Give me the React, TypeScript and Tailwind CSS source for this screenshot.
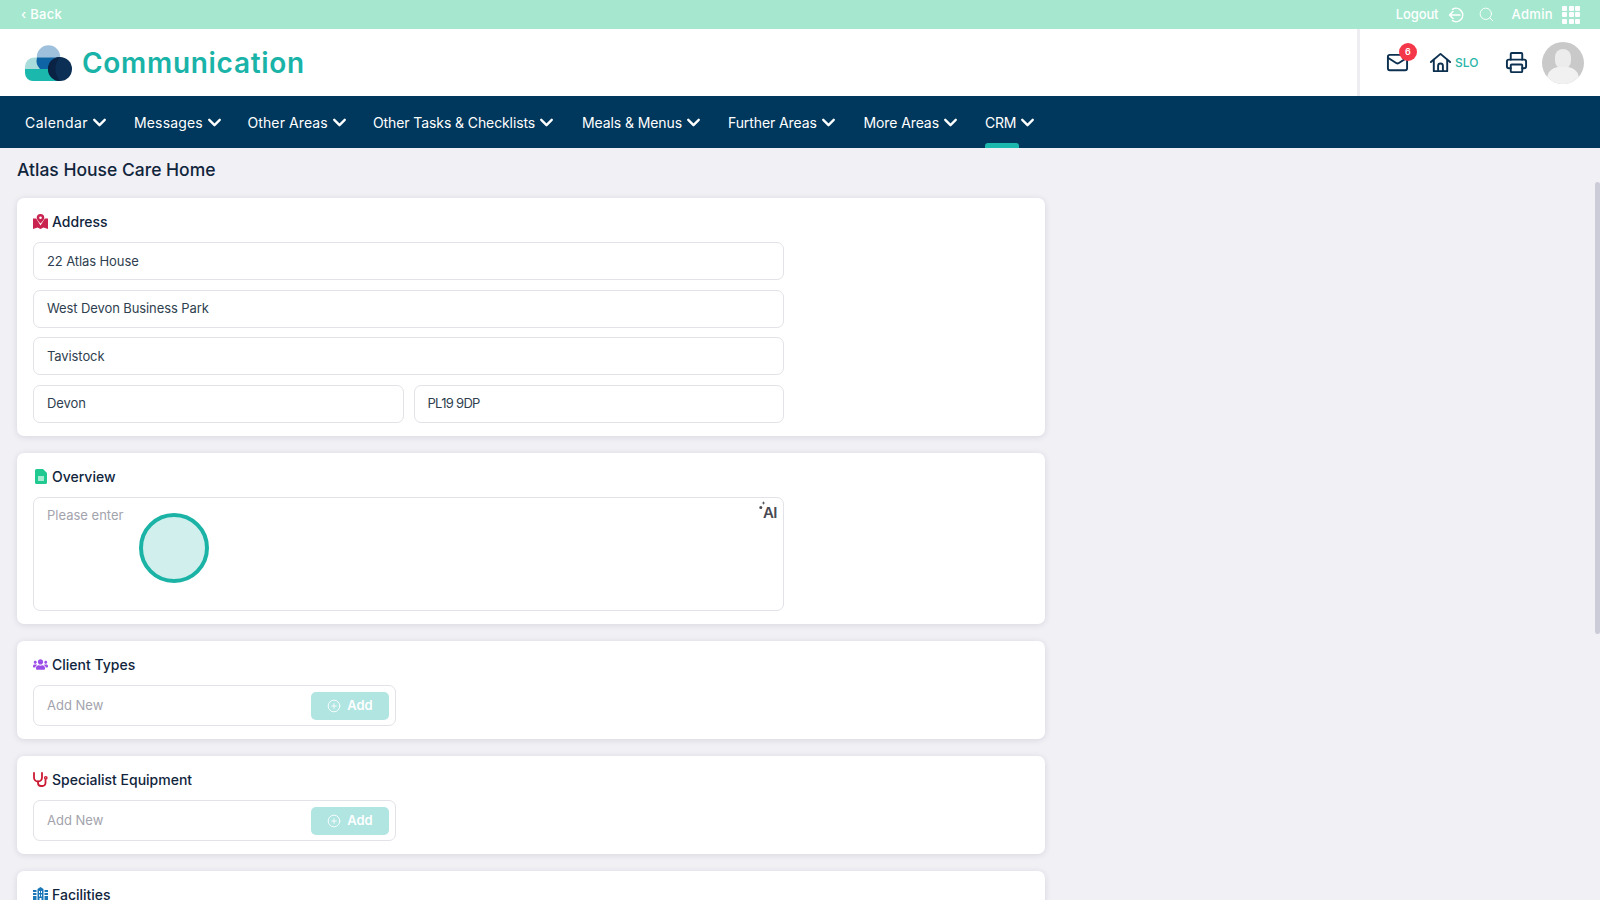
import React from "react";
import { ChevronDown, Mail, Search, Printer, CirclePlus } from "lucide-react";
import { FaUsers } from "react-icons/fa";

const font = { fontFamily: "Inter, 'Noto Sans', sans-serif" };
const nav = [
  { label: "Calendar", box: "w-[109px]", text: "tracking-[0.4px]" },
  { label: "Messages", box: "w-[113.5px]", text: "tracking-[0.15px]" },
  { label: "Other Areas", box: "w-[125.5px]", text: "tracking-[0.1px]" },
  { label: "Other Tasks & Checklists", box: "w-[209px]", text: "tracking-[-0.1px]" },
  { label: "Meals & Menus", box: "w-[146px]", text: "tracking-[-0.1px]" },
  { label: "Further Areas", box: "w-[135.5px]", text: "tracking-[-0.1px]" },
  { label: "More Areas", box: "w-[121.5px]", text: "tracking-[-0.1px]" },
  { label: "CRM", box: "w-[60px]", text: "tracking-[-0.3px]" },
];

function Field({ value, className = "", text = "tracking-[-0.1px]" }: { value: string; className?: string; text?: string }) {
  return (
    <div className={`h-[38px] flex items-center px-[13px] pt-[1px] bg-white border border-[#e2e2e8] rounded-[7px] text-[13px] text-[#2f3f50] ${text} ${className}`}>
      {value}
    </div>
  );
}

function Heading({ icon, children }: { icon: React.ReactNode; children: React.ReactNode }) {
  return (
    <div className="flex items-center gap-[4px] h-[16px] text-[14px] font-medium text-[#10253c]">
      <span className="w-[15px] h-[16px] flex items-center justify-center">{icon}</span>
      <span>{children}</span>
    </div>
  );
}

function Card({ className = "", children }: { className?: string; children: React.ReactNode }) {
  return <section className={`w-[1028px] bg-white rounded-[7px] shadow-[0_1px_6px_rgba(30,30,60,0.12)] px-[16px] pt-[15px] ${className}`}>{children}</section>;
}

function AddRow() {
  return (
    <div className="mt-[13px] w-[363px] h-[41px] border border-[#e2e2e8] rounded-[7px] flex items-center pl-[13px] pr-[6px]">
      <span className="flex-1 text-[13px] text-[#a3a3ad]">Add New</span>
      <span className="w-[78px] h-[28px] mt-[1px] rounded-[5px] bg-[#b0e5e2] text-white text-[13px] font-semibold flex items-center justify-center gap-[6px]">
        <CirclePlus size={14} strokeWidth={1.5} />
        Add
      </span>
    </div>
  );
}

export default function App() {
  return (
    <div style={font} className="relative w-full h-screen overflow-hidden bg-[#f0f0f5] flex flex-col">
      <header className="h-[29px] shrink-0 bg-[#a5e8cf] flex items-center justify-between pl-[21px] pr-[20px] text-white text-[13px] font-medium">
        <span className="tracking-[0.3px]">‹ Back</span>
        <div className="flex items-center">
          <span className="tracking-[-0.1px]">Logout</span>
          <svg className="ml-[10px]" width="16" height="16" viewBox="0 0 16 16" fill="none" stroke="currentColor" strokeWidth="1.5" strokeLinecap="round" strokeLinejoin="round">
            <path d="M4.500 2.300A6.700 6.700 0 1 1 4.500 13.700" />
            <path d="M12 8H1.500M5 4.500 1.500 8 5 11.500" />
          </svg>
          <Search className="ml-[14px]" size={17} strokeWidth={1.3} />
          <span className="ml-[16px] tracking-[0.35px]">Admin</span>
          <div className="ml-[9px] grid grid-cols-3 gap-[1.5px]">
            {Array.from({ length: 9 }).map((_, i) => (
              <span key={i} className="w-[5px] h-[5px] bg-white rounded-[1px]" />
            ))}
          </div>
        </div>
      </header>

      <div className="h-[67px] shrink-0 bg-white flex items-center">
        <div className="flex-1 flex items-center pl-[25px]">
          <svg width="47" height="36" viewBox="0 0 47 36">
            <circle cx="23.500" cy="12" r="11.700" fill="#9fc0dc" />
            <path d="M0 21.500a9 9 0 0 1 9-9h15v12H0z" fill="#a9dcdb" />
            <path d="M12 12.500h24v11.500H15a12 12 0 0 1-3-11.500z" fill="#0f64a6" />
            <path d="M0 24h36v12H8a8 8 0 0 1-8-8z" fill="#1bb9ad" />
            <circle cx="35" cy="24" r="12" fill="#0b2f55" />
            <path d="M35 12a12 12 0 0 0 0 24 18 18 0 0 1 0-24z" fill="#0a2344" />
          </svg>
          <span className="ml-[10px] mt-[1px] text-[28px] font-semibold text-[#1ab3a8] tracking-[0.7px]">Communication</span>
        </div>
        <div className="w-[243px] h-full border-l-[3px] border-[#eeeef2] flex items-center relative">
          <div className="relative ml-[26px]">
            <Mail size={23} strokeWidth={2} className="text-[#0c3050]" />
            <span className="absolute -top-[8px] left-[13px] w-[18px] h-[18px] rounded-full bg-[#f5374a] text-white text-[9px] font-semibold flex items-center justify-center">6</span>
          </div>
          <svg className="ml-[20px] text-[#0c3050]" width="23" height="23" viewBox="0 0 24 24" fill="none" stroke="currentColor" strokeWidth="2" strokeLinecap="round" strokeLinejoin="round">
            <path d="M2 11.500 12 3l10 8.500" />
            <path d="M5 9v12h14V9" />
            <path d="M9.500 21v-5.500a2.500 2.500 0 0 1 5 0V21" />
          </svg>
          <span className="ml-[3px] text-[12px] font-medium text-[#26b5a8]">SLO</span>
          <Printer className="ml-[27px] text-[#0c3050]" size={23} strokeWidth={2} />
          <div className="ml-[14px] w-[42px] h-[42px] rounded-full bg-[#c9c9c9] overflow-hidden relative">
            <span className="absolute left-[13px] top-[7px] w-[16px] h-[20px] rounded-[8px] bg-[#ececec]" />
            <span className="absolute left-[5px] top-[25px] w-[32px] h-[24px] rounded-[14px] bg-[#f1f1f1]" />
          </div>
        </div>
      </div>

      <nav className="h-[52px] shrink-0 bg-[#00375c] flex items-center pl-[25px] text-white text-[14px]">
        {nav.map((n) => (
          <div key={n.label} className={`relative h-full flex items-center ${n.box}`}>
            <span className={n.text}>{n.label}</span>
            <ChevronDown className="ml-[1px]" size={21} strokeWidth={2.7} />
            {n.label === "CRM" && <span className="absolute bottom-0 left-0 w-[34px] h-[5px] rounded-t-[3px] bg-[#1bb9ad]" />}
          </div>
        ))}
      </nav>

      <main className="flex-1 overflow-hidden pl-[17px]">
        <h1 className="mt-[11px] h-[22px] leading-[22px] text-[17.5px] font-medium text-[#10253c]">Atlas House Care Home</h1>

        <Card className="mt-[17px] h-[238px]">
          <Heading
            icon={
              <svg width="15" height="15" viewBox="0 0 15 15" fill="#c9244f">
                <path d="M0 4.500h3.200L7.500 11.500 11.800 4.500H15V15l-4.500-1.500L7.500 15l-3-1.500L0 15z" />
                <path fillRule="evenodd" d="M7.500 0a3.800 3.800 0 0 1 3.800 3.800c0 1.700-2.300 4.200-3.800 5.700C6 8 3.700 5.500 3.700 3.800A3.800 3.800 0 0 1 7.500 0zm0 2.500a1.300 1.300 0 1 0 0 2.600 1.300 1.300 0 0 0 0-2.600z" />
              </svg>
            }
          >
            Address
          </Heading>
          <div className="mt-[13px] w-[751px] flex flex-col gap-[9.5px]">
            <Field value="22 Atlas House" />
            <Field value="West Devon Business Park" />
            <Field value="Tavistock" />
            <div className="flex gap-[10px]">
              <Field value="Devon" className="flex-1" />
              <Field value="PL19 9DP" className="flex-1" text="tracking-[-0.7px]" />
            </div>
          </div>
        </Card>

        <Card className="mt-[17px] h-[171px]">
          <Heading
            icon={
              <svg width="12" height="15" viewBox="0 0 12 15">
                <path d="M1.500 0H8l4 4v9.500a1.500 1.500 0 0 1-1.500 1.500h-9A1.500 1.500 0 0 1 0 13.500v-12A1.500 1.500 0 0 1 1.500 0z" fill="#1fc98f" />
                <rect x="3" y="7" width="6" height="5" fill="#a5ecd3" />
              </svg>
            }
          >
            Overview
          </Heading>
          <div className="relative mt-[13px] w-[751px] h-[114px] border border-[#e2e2e8] rounded-[7px] px-[13px] py-[8px] text-[13px] text-[#a3a3ad]">
            Please enter
            <span className="absolute top-[6px] right-[6px] text-[15px] font-semibold text-[#4a4a52] leading-[18px] tracking-[-0.5px]">AI</span>
            <svg className="absolute top-[3px] right-[17px]" width="7" height="11" viewBox="0 0 7 11" fill="#4a4a52">
              <path d="M4.500 0l.5 1.500L6.500 2 5 2.500 4.500 4 4 2.500 2.500 2 4 1.500z" />
              <circle cx="1.800" cy="6.500" r="1.500" />
            </svg>
            <span className="absolute left-[105px] top-[15px] w-[70px] h-[70px] rounded-full border-[4px] border-[#1bb3a6] bg-[#d1f0ed]" />
          </div>
        </Card>

        <Card className="mt-[17px] h-[98px]">
          <Heading icon={<FaUsers size={15} color="#9b4de8" />}>Client Types</Heading>
          <AddRow />
        </Card>

        <Card className="mt-[17px] h-[98px]">
          <Heading
            icon={
              <svg width="15" height="15" viewBox="0 0 15 15" fill="none" stroke="#cc1a33" strokeWidth="1.800" strokeLinecap="round">
                <path d="M1 1v4.500a4 4 0 0 0 8 0V1" />
                <path d="M5 9.500V11a3 3 0 0 0 3 3h1.500a3 3 0 0 0 3-3V8" />
                <circle cx="12.800" cy="5.800" r="1.200" strokeWidth="1.400" />
              </svg>
            }
          >
            Specialist Equipment
          </Heading>
          <AddRow />
        </Card>

        <Card className="mt-[17px] h-[98px]">
          <Heading
            icon={
              <svg width="15" height="14" viewBox="0 0 15 14" fill="#1b78b8">
                <path fillRule="evenodd" d="M4.500 2 7.500 0l3 2v12h-2v-3h-2v3h-2zM6 4v2h1V4zM8 4v2h1V4zM6 7.500v2h1v-2zM8 7.500v2h1v-2z" />
                <rect x="0" y="3" width="3.500" height="2" />
                <rect x="0" y="6" width="3.500" height="2" />
                <rect x="0" y="9" width="3.500" height="5" />
                <rect x="11.500" y="3" width="3.500" height="2" />
                <rect x="11.500" y="6" width="3.500" height="2" />
                <rect x="11.500" y="9" width="3.500" height="5" />
              </svg>
            }
          >
            Facilities
          </Heading>
        </Card>
      </main>

      <div className="absolute right-[0px] top-[182px] w-[5px] h-[452px] rounded-[3px] bg-[#ccccd9]" />
    </div>
  );
}
